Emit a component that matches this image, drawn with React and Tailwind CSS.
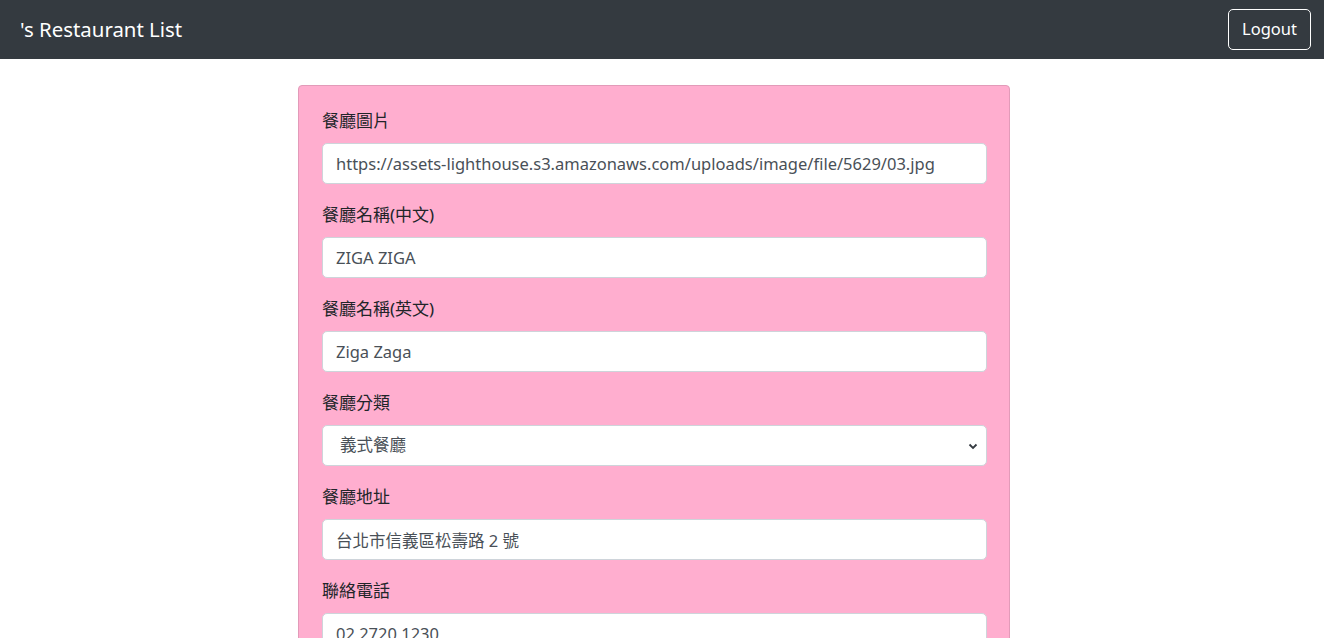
import { useState } from 'react';

const font = { fontFamily: '"Noto Sans", "Noto Sans CJK TC", sans-serif' };

function Field({ label, children }) {
  return (
    <div className="mb-[18px]">
      <label className="block mb-[9px] text-[17px] leading-[26px] text-[#212529]">{label}</label>
      {children}
    </div>
  );
}

function TextInput({ value, onChange }) {
  return (
    <input
      type="text"
      value={value}
      onChange={(e) => onChange(e.target.value)}
      className="block w-full h-[41px] px-[13px] text-[16.5px] text-[#495057] bg-white border border-[#ced4da] rounded-[5px] outline-none"
    />
  );
}

export default function App() {
  const [form, setForm] = useState({
    image: 'https://assets-lighthouse.s3.amazonaws.com/uploads/image/file/5629/03.jpg',
    name: 'ZIGA ZIGA',
    nameEn: 'Ziga Zaga',
    category: '義式餐廳',
    location: '台北市信義區松壽路 2 號',
    phone: '02 2720 1230',
    rating: '4.2',
    description: '以頂級食材與料理技法完美結合，搭配多種美酒，讓每一次用餐都是難忘的回憶。',
  });

  const set = (key) => (value) => setForm({ ...form, [key]: value });

  return (
    <div className="min-h-screen bg-white" style={font}>
      {/* Navbar */}
      <nav className="flex items-center h-[59px] bg-[#343a40] pl-[20px] pr-[13px]">
        <span className="text-[20.4px] text-white leading-none">'s Restaurant List</span>
        <button className="ml-auto h-[41px] px-[13px] text-[16.5px] text-white border border-white rounded-[5px]">
          Logout
        </button>
      </nav>

      <div className="w-[1308px] pt-[26px] pb-10">
        <form className="mx-auto w-[712px] bg-[#ffaecf] border border-[#e29bb9] rounded-[4px] pl-[23px] pr-[22px] pt-[22px] pb-[6px]">
          <Field label="餐廳圖片">
            <TextInput value={form.image} onChange={set('image')} />
          </Field>
          <Field label="餐廳名稱(中文)">
            <TextInput value={form.name} onChange={set('name')} />
          </Field>
          <Field label="餐廳名稱(英文)">
            <TextInput value={form.nameEn} onChange={set('nameEn')} />
          </Field>
          <Field label="餐廳分類">
            <div className="relative">
              <select
                value={form.category}
                onChange={(e) => set('category')(e.target.value)}
                className="block w-full h-[41px] pl-[17px] pr-8 text-[16.5px] text-[#495057] bg-white border border-[#ced4da] rounded-[5px] outline-none appearance-none"
              >
                <option>中東料理</option>
                <option>日本料理</option>
                <option>義式餐廳</option>
                <option>美式</option>
                <option>酒吧</option>
                <option>咖啡</option>
              </select>
              <svg
                className="absolute right-[9px] top-1/2 -translate-y-1/2 pointer-events-none"
                width="10"
                height="8"
                viewBox="0 0 10 8"
              >
                <path d="M1.5 2.5 L5 6 L8.5 2.5" fill="none" stroke="#343a40" strokeWidth="1.8" />
              </svg>
            </div>
          </Field>
          <Field label="餐廳地址">
            <TextInput value={form.location} onChange={set('location')} />
          </Field>
          <Field label="聯絡電話">
            <TextInput value={form.phone} onChange={set('phone')} />
          </Field>
          <Field label="評分">
            <TextInput value={form.rating} onChange={set('rating')} />
          </Field>
          <Field label="餐廳描述">
            <textarea
              rows={3}
              value={form.description}
              onChange={(e) => set('description')(e.target.value)}
              className="block w-full px-[13px] py-[6px] text-[16.5px] text-[#495057] bg-white border border-[#ced4da] rounded-[5px] outline-none"
            />
          </Field>
          <button type="button" className="mb-[18px] h-[41px] px-[14px] text-[16.5px] text-white bg-[#007bff] rounded-[5px]">
            Submit
          </button>
        </form>
      </div>
    </div>
  );
}
